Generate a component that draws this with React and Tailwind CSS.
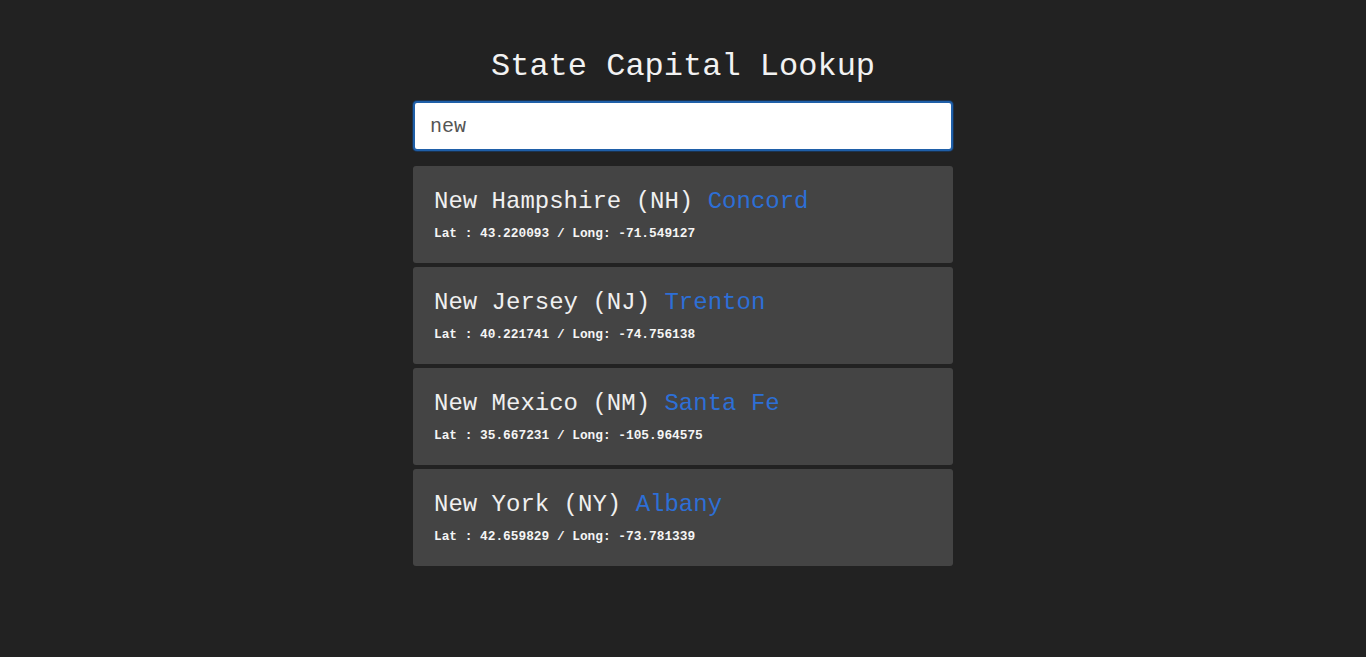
import React from "react";

const states = [
  { name: "New Hampshire", abbr: "NH", capital: "Concord", lat: "43.220093", long: "-71.549127" },
  { name: "New Jersey", abbr: "NJ", capital: "Trenton", lat: "40.221741", long: "-74.756138" },
  { name: "New Mexico", abbr: "NM", capital: "Santa Fe", lat: "35.667231", long: "-105.964575" },
  { name: "New York", abbr: "NY", capital: "Albany", lat: "42.659829", long: "-73.781339" },
];

export default function App() {
  const [query, setQuery] = React.useState("new");

  const matches = states.filter((s) =>
    s.name.toLowerCase().startsWith(query.toLowerCase()) ||
    s.abbr.toLowerCase().startsWith(query.toLowerCase())
  );

  return (
    <div className="min-h-screen bg-[#222222] text-white font-['Liberation_Mono','Courier_New',monospace]">
      <div className="w-[540px] mx-auto pt-[49px] flex flex-col">
        <h1 className="text-[32px] leading-[36px] text-center text-[#f2f2f2]">State Capital Lookup</h1>

        <input
          type="text"
          value={query}
          onChange={(e) => setQuery(e.target.value)}
          autoFocus
          className="mt-[16px] h-[50px] w-full rounded-[4px] bg-white border-2 border-[#1f5fa8] shadow-[0_0_0_1px_#1b3350] px-[15px] text-[20px] text-[#555555] outline-none caret-[#222]"
        />

        <ul className="mt-[15px] flex flex-col gap-[4px]">
          {matches.map((s) => (
            <li key={s.abbr} className="bg-[#444444] rounded-[3px] px-[21px] pt-[22px] pb-[21px]">
              <h2 className="text-[24px] leading-[28px] text-[#f0f0f0]">
                {s.name} ({s.abbr}) <span className="text-[#2d6fd6]">{s.capital}</span>
              </h2>
              <p className="mt-[10px] text-[12.8px] leading-[16px] font-bold text-[#f5f5f5]">
                Lat : {s.lat} / Long: {s.long}
              </p>
            </li>
          ))}
        </ul>
      </div>
    </div>
  );
}
